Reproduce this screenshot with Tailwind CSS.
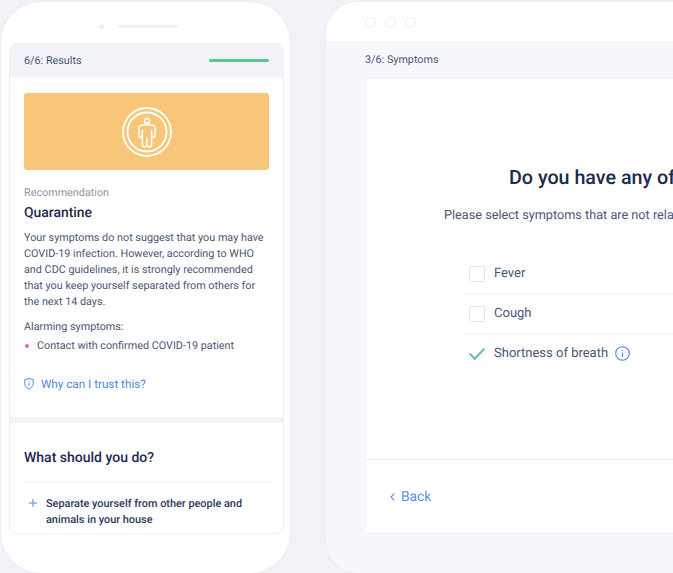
<!DOCTYPE html>
<html lang="en">
<head>
<meta charset="utf-8"/>
<title>Symptom checker</title>
<script src="https://cdn.jsdelivr.net/npm/@tailwindcss/browser@4"></script>
</head>
<body class="w-[673px] h-[573px] overflow-hidden bg-[#f1f3f8] font-['Roboto',sans-serif] [text-rendering:geometricPrecision]">
  <div class="flex items-start gap-[36px] pl-[1px] pt-[2px] w-[1100px]">

    <!-- Phone -->
    <div class="w-[289px] h-[571px] shrink-0 bg-white rounded-[40px] px-[8px] pt-[20px] shadow-[0_0_2px_rgba(180,190,210,0.35)]">
      <div class="flex items-center gap-[14px] h-[8px] pl-[90px]">
        <span class="w-[5px] h-[5px] rounded-full bg-[#eef0f5]"></span>
        <span class="w-[60px] h-[3px] rounded-full bg-[#eef0f5]"></span>
      </div>
      <div class="mt-[13px] w-[275px] h-[491px] overflow-hidden rounded-[8px] bg-white border border-[#eceef3]">
        <div class="h-[33px] bg-[#f1f3f8] flex items-center justify-between pl-[14px] pr-[14px]">
          <span class="text-[10.800px] leading-[14px] text-[#4a5674]">6/6: Results</span>
          <span class="w-[60px] h-[3px] rounded-full bg-[#5cc591]"></span>
        </div>
        <div class="px-[14px] pt-[16px]">
          <div class="h-[77px] rounded-[3px] bg-[#f7c678] flex items-center justify-center">
            <svg class="w-[50px] h-[50px]" viewBox="0 0 50 50" fill="none" stroke="#fff" stroke-width="1.500" stroke-linejoin="round">
              <circle cx="25" cy="25" r="24" stroke-width="1.800"/>
              <circle cx="25" cy="25" r="19.500" stroke-width="1.800"/>
              <circle cx="25" cy="14" r="2.500"/>
              <path d="M20.500 18H29.500C31.700 18 33 19.300 33 21.500V28.500C33 29.800 32.200 30.500 31.300 30.500C30.400 30.500 29.600 29.800 29.600 28.500V23.500V38.300C29.600 39.500 28.900 40 28 40C26.500 40 25 39.500 25 38V31V38C25 39.500 23.500 40 22 40C21 40 20.400 39.500 20.400 38.300V23.500V28.500C20.400 29.800 19.600 30.500 18.700 30.500C17.800 30.500 17 29.800 17 28.500V21.500C17 19.300 18.300 18 20.500 18Z"/>
            </svg>
          </div>
          <p class="mt-[15px] text-[10.800px] leading-[16px] text-[#8d96ab]">Recommendation</p>
          <h2 class="mt-[2px] text-[13.900px] leading-[20px] font-medium text-[#1c2a4d]">Quarantine</h2>
          <p class="mt-[7px] text-[10.800px] leading-[16px] text-[#4a5674] whitespace-nowrap">Your symptoms do not suggest that you may have<br>COVID-19 infection. However, according to WHO<br>and CDC guidelines, it is strongly recommended<br>that you keep yourself separated from others for<br>the next 14 days.</p>
          <p class="mt-[9px] text-[10.800px] leading-[16px] text-[#4a5674]">Alarming symptoms:</p>
          <div class="mt-[3px] flex items-center text-[10.800px] leading-[16px] text-[#4a5674]">
            <span class="w-[4px] h-[4px] rounded-full bg-[#ef6f6f] ml-[1px] mr-[8px]"></span>
            <span class="whitespace-nowrap">Contact with confirmed COVID-19 patient</span>
          </div>
          <div class="mt-[22px] flex items-center gap-[7px] text-[11.700px] leading-[16px] text-[#4f86e0]">
            <svg class="w-[10px] h-[12px]" viewBox="0 0 10 12" fill="none" stroke="#4f86e0" stroke-width="1">
              <path d="M.8 1.500 5 .6l4.200.9v4.300c0 2.300-1.800 3.900-4.200 5.500C2.600 9.700.8 8.100.8 5.800Z" stroke-linejoin="round"/>
              <path d="M5 3v.8M5 4.800v2.700"/>
            </svg>
            <span>Why can I trust this?</span>
          </div>
        </div>
        <div class="mt-[25px] h-[6px] bg-[#f1f3f8]"></div>
        <div class="px-[14px]">
          <h3 class="mt-[25px] text-[14px] leading-[20px] font-medium text-[#1c2a4d]">What should you do?</h3>
          <div class="mt-[14px] border-t border-[#eceef3] pt-[13px] flex items-start">
            <svg class="w-[8px] h-[8px] mt-[3px] ml-[5px] mr-[9px] shrink-0" viewBox="0 0 8 8" stroke="#4f86e0" stroke-width="1"><path d="M4 0v8M0 4h8"/></svg>
            <p class="text-[10.900px] leading-[16px] font-medium text-[#2c3857]">Separate yourself from other people and<br>animals in your house</p>
          </div>
        </div>
      </div>
    </div>

    <!-- Browser window -->
    <div class="w-[760px] h-[571px] shrink-0 rounded-[32px] bg-[#f6f8fb] overflow-hidden shadow-[0_0_2px_rgba(180,190,210,0.35)]">
      <div class="h-[41px] bg-white border-b border-[#eceef3] flex items-center gap-[9px] pl-[39px]">
        <span class="w-[11px] h-[11px] rounded-full border border-[#e9ebf0]"></span>
        <span class="w-[11px] h-[11px] rounded-full border border-[#e9ebf0]"></span>
        <span class="w-[11px] h-[11px] rounded-full border border-[#e9ebf0]"></span>
      </div>
      <div class="pl-[39px]">
        <p class="h-[35px] flex items-center text-[10.800px] text-[#4a5674]">3/6: Symptoms</p>
        <div class="h-[456px] bg-white rounded-[4px] border border-[#f1f3f7] flex flex-col">
          <div class="flex-1 pl-[78px] pt-[87px]">
            <h1 class="pl-[65px] text-[19.700px] leading-[24px] font-medium text-[#1c2a4d] whitespace-nowrap">Do you have any of these symptoms?</h1>
            <p class="mt-[16px] text-[12.700px] leading-[20px] text-[#4a5674] whitespace-nowrap">Please select symptoms that are not related to chronic disease</p>
            <ul class="mt-[28px] pl-[20px] text-[13px] text-[#4a5674]">
              <li class="h-[40px] border-b border-[#eceef3] flex items-center pl-[5px] gap-[9px]">
                <span class="w-[16px] h-[16px] rounded-[2px] border border-[#e3e5ea]"></span>Fever
              </li>
              <li class="h-[40px] border-b border-[#eceef3] flex items-center pl-[5px] gap-[9px]">
                <span class="w-[16px] h-[16px] rounded-[2px] border border-[#e3e5ea]"></span>Cough
              </li>
              <li class="h-[40px] flex items-center pl-[5px] gap-[9px]">
                <svg class="w-[16px] h-[12px]" viewBox="0 0 16 12" fill="none" stroke="#5cc591" stroke-width="2"><path d="M.6 5.500 5.800 10.800 15.400.8"/></svg>
                <span>Shortness of breath</span>
                <svg class="w-[15px] h-[15px] -ml-[2px] -mt-[1px]" viewBox="0 0 15 15" fill="none" stroke="#4f86e0" stroke-width="1.100"><circle cx="7.500" cy="7.500" r="6.800"/><path d="M7.500 4v1M7.500 6.500v4.500"/></svg>
              </li>
            </ul>
          </div>
          <div class="h-[74px] border-t border-[#eceef3] flex items-center pl-[24px] pt-[1px] gap-[6px] text-[13.800px] text-[#5b8fe2]">
            <svg class="w-[5px] h-[8px]" viewBox="0 0 5 8" fill="none" stroke="#5b8fe2" stroke-width="1.100"><path d="M4.300.7 1 4l3.300 3.300"/></svg>
            <span>Back</span>
          </div>
        </div>
      </div>
    </div>
  </div>
</body>
</html>
